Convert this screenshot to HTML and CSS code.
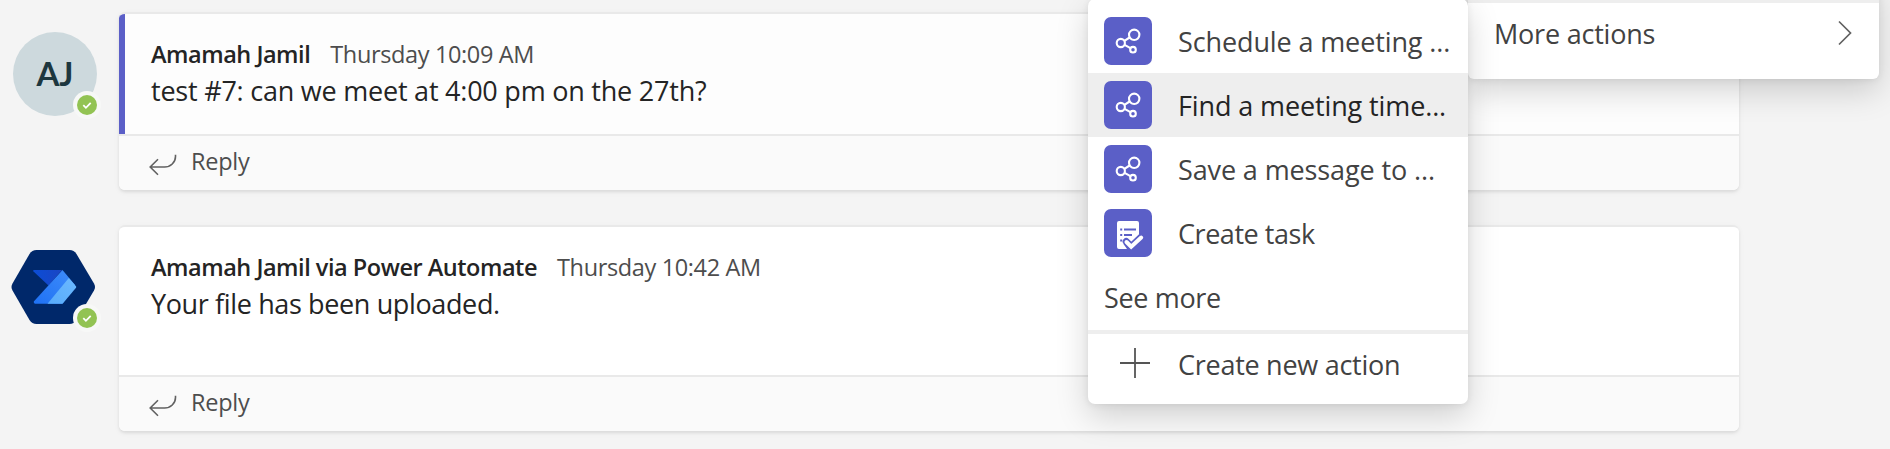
FILE: index.html
```html
<!DOCTYPE html>
<html lang="en">
<head>
<meta charset="utf-8">
<title>Conversation</title>
<link rel="stylesheet" href="styles.css">
</head>
<body>
<svg class="defs" aria-hidden="true">
  <symbol id="flow" viewBox="0 0 48 48">
    <g fill="none" stroke="#fff" stroke-width="2.100">
      <circle cx="30.2" cy="17.8" r="5.2"/>
      <circle cx="16.8" cy="26" r="4.1"/>
      <circle cx="29" cy="32.7" r="2.800"/>
      <path d="M20.4 23.8l5.2-3.3M20.6 27.9l5.8 3.3"/>
    </g>
  </symbol>
  <symbol id="check" viewBox="0 0 28 28">
    <circle cx="14" cy="14" r="14" fill="#f7f8f7"/>
    <circle cx="14" cy="14" r="10" fill="#92c353"/>
    <path d="M10.3 14.2l2.6 2.6 4.8-5" fill="none" stroke="#fff" stroke-width="1.8"/>
  </symbol>
  <symbol id="reply" viewBox="0 0 28 22">
    <path d="M26.500 0.8v1.7C26.500 8.500 21.500 13 15.500 13H1.200M9 5.200L1.200 13l7.800 7.800" fill="none" stroke="#616161" stroke-width="1.600"/>
  </symbol>
</svg>

<main class="feed">
  <article class="post">
    <div class="avatar">
      <span class="initials">AJ</span>
      <svg class="status"><use href="#check"/></svg>
    </div>
    <section class="card">
      <div class="message highlighted">
        <header class="meta"><b class="author">Amamah Jamil</b><time class="time">Thursday 10:09 AM</time></header>
        <p class="text text-question">test #7: can we meet at 4:00 pm on the 27th?</p>
      </div>
      <footer class="reply"><svg class="reply-icon"><use href="#reply"/></svg><span>Reply</span></footer>
    </section>
  </article>

  <article class="post">
    <div class="avatar">
      <svg class="app-logo" viewBox="0 0 84 84">
        <defs>
          <linearGradient id="back" x1="0" y1="0" x2="1" y2="0"><stop offset="0" stop-color="#0b4dd6"/><stop offset="1" stop-color="#1b45c4"/></linearGradient>
          <linearGradient id="front" x1="0" y1="1" x2="1" y2="0"><stop offset="0" stop-color="#1f71f3"/><stop offset="1" stop-color="#3f8dfb"/></linearGradient>
          <linearGradient id="tip" x1="0" y1="1" x2="1" y2="0"><stop offset="0" stop-color="#58abfa"/><stop offset="1" stop-color="#6bb9ff"/></linearGradient>
        </defs>
        <path fill="#00286a" d="M23.500 5H56.500Q61 5 63.500 9L81 38.500Q83 42 81 45.500L63.500 75Q61 79 56.500 79H23.500Q19 79 16.500 75L-.5 45.500Q-2.500 42-.5 38.500L16.500 9Q19 5 23.500 5Z"/>
        <path fill="url(#back)" d="M20.500 25H49L35.500 40.500L20.500 26.500Q20 25.200 20.500 25Z"/>
        <path fill="url(#front)" d="M49.500 25L62 40L49.500 58.800H22Q20.500 58.500 20.800 56.500Z"/>
        <path fill="url(#tip)" d="M55.800 33L63 41.300Q63.500 42 63 42.700L50 58.200Q49.300 58.800 48 58.800H34.500Z"/>
      </svg>
      <svg class="status"><use href="#check"/></svg>
    </div>
    <section class="card">
      <div class="message tall">
        <header class="meta"><b class="author">Amamah Jamil via Power Automate</b><time class="time">Thursday 10:42 AM</time></header>
        <p class="text text-note">Your file has been uploaded.</p>
      </div>
      <footer class="reply"><svg class="reply-icon"><use href="#reply"/></svg><span>Reply</span></footer>
    </section>
  </article>
</main>

<div class="context-menu">
  <div class="context-item">
    <span>More actions</span>
    <svg class="chevron" viewBox="0 0 14 26"><path d="M1 1.500L12.500 13L1 24.500" fill="none" stroke="#616161" stroke-width="1.700"/></svg>
  </div>
</div>

<div class="submenu">
  <div class="item"><svg class="tile"><use href="#flow"/></svg><span class="wide">Schedule a meeting ...</span></div>
  <div class="item active"><svg class="tile"><use href="#flow"/></svg><span class="wide">Find a meeting time...</span></div>
  <div class="item"><svg class="tile"><use href="#flow"/></svg><span class="wide">Save a message to ...</span></div>
  <div class="item low">
    <svg class="tile" viewBox="0 0 48 48">
      <path fill="#fff" d="M15 12H33Q35 12 35 14V27.500L28 34.500L24 30.500L19.500 35L23 40H15Q13 40 13 38V14Q13 12 15 12Z"/>
      <g stroke="#5b5fc7" stroke-width="2"><path d="M16.200 20.500h2M20 20.500h12M16.200 26h2M20 26h8M16.200 31.500h2"/></g>
      <path d="M22.200 32.500L27.200 37.500L37.200 28" fill="none" stroke="#5b5fc7" stroke-width="7" stroke-linecap="round"/>
      <path d="M22.500 33L27.200 37.700L37.200 28.500" fill="none" stroke="#fff" stroke-width="4" stroke-linecap="round"/>
    </svg>
    <span class="task">Create task</span>
  </div>
  <div class="item low last"><span class="more">See more</span></div>
  <div class="item create">
    <svg class="plus" viewBox="0 0 30 30"><path d="M15 0v30M0 15h30" stroke="#555" stroke-width="1.800"/></svg>
    <span>Create new action</span>
  </div>
</div>
</body>
</html>
```
FILE: styles.css
```css
* { box-sizing: border-box; }

body {
  position: relative;
  width: 1890px;
  height: 449px;
  margin: 0;
  overflow: hidden;
  background: #f4f4f4;
  color: #242424;
  font-family: "Open Sans", "Noto Sans", sans-serif;
}

.defs { position: absolute; width: 0; height: 0; }

.feed {
  display: flex;
  flex-direction: column;
  gap: 35px;
  padding: 12px 151px 0 13px;
}

.post {
  display: flex;
  align-items: flex-start;
  gap: 22px;
}

.avatar {
  position: relative;
  width: 84px;
  height: 84px;
  margin-top: 20px;
}

.initials {
  display: block;
  width: 84px;
  height: 84px;
  border-radius: 50%;
  background: #cdd9dd;
  color: #1d373f;
  font: 700 33px/82px Lato, sans-serif;
  text-align: center;
}

.app-logo {
  display: block;
  width: 84px;
  height: 84px;
  overflow: visible;
}

.status {
  position: absolute;
  left: 60px;
  top: 59px;
  width: 28px;
  height: 28px;
}

.card {
  flex: 1;
  overflow: hidden;
  border-top: 2px solid #e9e9e9;
  border-radius: 6px;
  background: #fff;
  box-shadow: 0 2px 3px rgba(0, 0, 0, .07), 0 2px 6px rgba(0, 0, 0, .05);
}

.message {
  height: 122px;
  padding: 24px 32px 0;
  border-bottom: 2px solid #e9e9e9;
}

.message.highlighted {
  background: linear-gradient(to right, #5b5fc7 6px, #fdfdfd 6px);
}

.message.tall { height: 150px; }

.meta {
  display: flex;
  gap: 20px;
  height: 34px;
  font-size: 23.5px;
  line-height: 32px;
}

.author { font-weight: 600; letter-spacing: -.47px; }

.time { color: #4d4d4d; letter-spacing: -.36px; }

.text { margin: 0; font-size: 27px; line-height: 38px; }

.text-question { letter-spacing: -.225px; }

.text-note { letter-spacing: -.37px; }

.reply {
  display: flex;
  align-items: flex-start;
  gap: 14px;
  height: 54px;
  padding: 8px 30px 0;
  background: #fafafa;
  color: #4d4d4d;
  font-size: 23.5px;
  line-height: 34px;
  letter-spacing: -.25px;
}

.reply-icon { width: 28px; height: 22px; margin-top: 9.5px; }

.context-menu {
  position: absolute;
  left: 1468px;
  top: -20px;
  width: 411px;
  height: 99px;
  border-top: 23px solid #eee;
  border-radius: 0 0 6px 6px;
  background: #fff;
  box-shadow: 0 12px 32px rgba(0, 0, 0, .17), 0 1px 7px rgba(0, 0, 0, .08);
}

.context-item {
  display: flex;
  justify-content: space-between;
  padding: 0 27px 0 26px;
  color: #424242;
  font-size: 27px;
  line-height: 62px;
  letter-spacing: -.22px;
}

.chevron { width: 14px; height: 26px; margin-top: 17px; }

.submenu {
  position: absolute;
  left: 1088px;
  top: -1px;
  width: 380px;
  height: 405px;
  padding-top: 10px;
  border-radius: 7px;
  background: #fff;
  box-shadow: 0 12px 32px rgba(0, 0, 0, .17), 0 1px 7px rgba(0, 0, 0, .08);
  color: #424242;
  font-size: 27px;
}

.item {
  display: flex;
  align-items: flex-start;
  gap: 26px;
  height: 64px;
  padding: 0 16px;
  line-height: 65px;
  letter-spacing: -.27px;
  white-space: nowrap;
}

.item.active { background: #eee; color: #242424; }

.item.low { line-height: 66px; }

.item.last { height: 65px; }

.tile {
  width: 48px;
  height: 48px;
  margin-top: 8px;
  border-radius: 7px;
  background: #5b5fc7;
}

.wide { letter-spacing: -.12px; }

.task { letter-spacing: -.45px; }

.more { letter-spacing: -.34px; }

.item.create {
  gap: 28px;
  height: 74px;
  padding-left: 32px;
  border-top: 4px solid #eee;
  line-height: 62px;
}

.plus { width: 30px; height: 30px; margin-top: 14px; }
```
